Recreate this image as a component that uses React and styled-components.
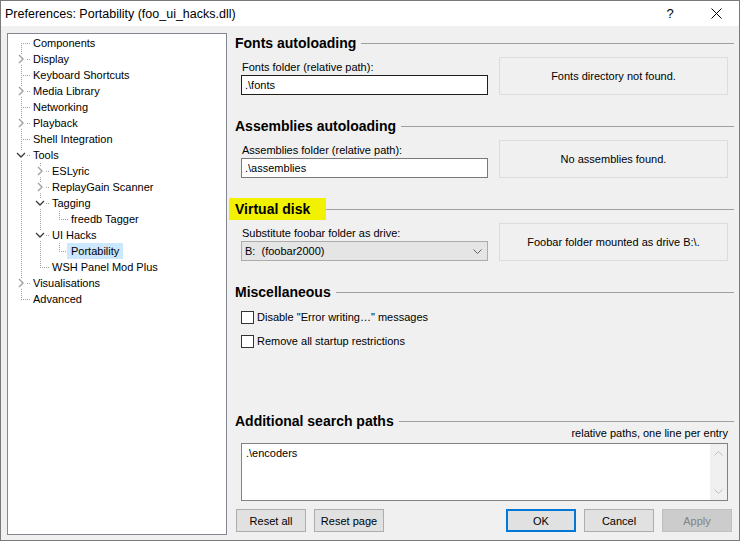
import React from "react";
import styled, { createGlobalStyle } from "styled-components";

const GlobalStyle = createGlobalStyle`
  body {
    margin: 0;
    background: #ffffff;
    font-family: "Liberation Sans", Arial, sans-serif;
    font-size: 11px;
    color: #000;
  }
  * { box-sizing: border-box; }
`;

const dotsV = "repeating-linear-gradient(to bottom, #a0a0a0 0 1px, transparent 1px 2px)";
const dotsH = "repeating-linear-gradient(to right, #a0a0a0 0 1px, transparent 1px 2px)";

const tree = [
  { label: "Components" },
  { label: "Display", collapsed: true },
  { label: "Keyboard Shortcuts" },
  { label: "Media Library", collapsed: true },
  { label: "Networking" },
  { label: "Playback", collapsed: true },
  { label: "Shell Integration" },
  {
    label: "Tools",
    open: true,
    kids: [
      { label: "ESLyric", collapsed: true },
      { label: "ReplayGain Scanner", collapsed: true },
      { label: "Tagging", open: true, kids: [{ label: "freedb Tagger" }] },
      { label: "UI Hacks", open: true, kids: [{ label: "Portability", selected: true }] },
      { label: "WSH Panel Mod Plus" },
    ],
  },
  { label: "Visualisations", collapsed: true },
  { label: "Advanced" },
];

function flatten(nodes, guides = [], out = []) {
  nodes.forEach((n, i) => {
    const last = i === nodes.length - 1;
    const first = guides.length === 0 && i === 0;
    out.push({ ...n, guides, last, first });
    if (n.open) flatten(n.kids, [...guides, !last], out);
  });
  return out;
}

function Chevron({ open }) {
  return (
    <svg width="11" height="16" viewBox="0 0 11 16" style={{ marginLeft: 4 }}>
      <rect x="0" y="3" width="11" height="10" fill="#fff" />
      {open ? (
        <path d="M1 6 L5 10 L9 6" fill="none" stroke="#3c3c3c" strokeWidth="1.3" />
      ) : (
        <path d="M3 4 L7 8 L3 12" fill="none" stroke="#a6a6a6" strokeWidth="1.5" />
      )}
    </svg>
  );
}

function App() {
  const rows = flatten(tree);
  return (
    <>
      <GlobalStyle />
      <Window>
        <TitleBar>
          <Title>Preferences: Portability (foo_ui_hacks.dll)</Title>
          <CaptionButton>?</CaptionButton>
          <CaptionButton>
            <svg width="11" height="11" viewBox="0 0 11 11">
              <path d="M0.5 0.5 L10.5 10.5 M10.5 0.5 L0.5 10.5" stroke="#000" strokeWidth="1" />
            </svg>
          </CaptionButton>
        </TitleBar>
        <Body>
          <Tree>
            {rows.map((r) => (
              <TreeRow key={r.label}>
                {r.guides.map((g, i) => (
                  <Guide key={i} $line={g} />
                ))}
                <Connector $first={r.first} $last={r.last}>
                  {(r.open || r.collapsed) && <Chevron open={r.open} />}
                </Connector>
                <TreeLabel $selected={r.selected}>{r.label}</TreeLabel>
              </TreeRow>
            ))}
          </Tree>
          <Panel>
            <SectionHeader>
              <HeaderText>Fonts autoloading</HeaderText>
              <HeaderLine />
            </SectionHeader>
            <FieldRow>
              <FieldColumn>
                <FieldLabel>Fonts folder (relative path):</FieldLabel>
                <TextBox $dark>{".\\fonts"}</TextBox>
              </FieldColumn>
              <StatusBox>Fonts directory not found.</StatusBox>
            </FieldRow>

            <SectionHeader $gap>
              <HeaderText>Assemblies autoloading</HeaderText>
              <HeaderLine />
            </SectionHeader>
            <FieldRow>
              <FieldColumn>
                <FieldLabel>Assemblies folder (relative path):</FieldLabel>
                <TextBox>{".\\assemblies"}</TextBox>
              </FieldColumn>
              <StatusBox>No assemblies found.</StatusBox>
            </FieldRow>

            <SectionHeader $gap>
              <HeaderText $highlight>Virtual disk</HeaderText>
              <HeaderLine $flush />
            </SectionHeader>
            <FieldRow>
              <FieldColumn>
                <FieldLabel>Substitute foobar folder as drive:</FieldLabel>
                <Select>
                  <span>B:  (foobar2000)</span>
                  <svg width="9" height="5" viewBox="0 0 9 5">
                    <path d="M0.5 0.5 L4.5 4.5 L8.5 0.5" fill="none" stroke="#606060" strokeWidth="1" />
                  </svg>
                </Select>
              </FieldColumn>
              <StatusBox>{"Foobar folder mounted as drive B:\\."}</StatusBox>
            </FieldRow>

            <SectionHeader $gap>
              <HeaderText>Miscellaneous</HeaderText>
              <HeaderLine />
            </SectionHeader>
            <CheckList>
              <CheckRow>
                <CheckBox />
                Disable "Error writing…" messages
              </CheckRow>
              <CheckRow>
                <CheckBox />
                Remove all startup restrictions
              </CheckRow>
            </CheckList>

            <Spacer />

            <SectionHeader>
              <HeaderText>Additional search paths</HeaderText>
              <HeaderLine />
            </SectionHeader>
            <Hint>relative paths, one line per entry</Hint>
            <TextArea>
              <TextAreaContent>{".\\encoders"}</TextAreaContent>
              <ScrollBar>
                <svg width="9" height="5" viewBox="0 0 9 5">
                  <path d="M0.5 4.5 L4.5 0.5 L8.5 4.5" fill="none" stroke="#c0c0c0" strokeWidth="1" />
                </svg>
                <svg width="9" height="5" viewBox="0 0 9 5">
                  <path d="M0.5 0.5 L4.5 4.5 L8.5 0.5" fill="none" stroke="#c0c0c0" strokeWidth="1" />
                </svg>
              </ScrollBar>
            </TextArea>

            <Footer>
              <Button>Reset all</Button>
              <Button>Reset page</Button>
              <Spacer />
              <Button $default>OK</Button>
              <Button>Cancel</Button>
              <Button $disabled>Apply</Button>
            </Footer>
          </Panel>
        </Body>
      </Window>
    </>
  );
}

const Window = styled.div`
  width: 740px;
  height: 541px;
  border: 1px solid #7a7a7a;
  background: #f0f0f0;
  display: flex;
  flex-direction: column;
`;

const TitleBar = styled.div`
  height: 25px;
  background: #ffffff;
  display: flex;
  align-items: center;
  padding-left: 4px;
  flex: none;
`;

const Title = styled.div`
  flex: 1;
  font-size: 12.5px;
  color: #000;
`;

const CaptionButton = styled.div`
  width: 46px;
  height: 25px;
  display: flex;
  align-items: center;
  justify-content: center;
  font-size: 13px;
`;

const Body = styled.div`
  flex: 1;
  display: flex;
  padding: 7px 5px 5px 6px;
  min-height: 0;
`;

const Tree = styled.div`
  width: 220px;
  flex: none;
  background: #ffffff;
  border: 1px solid #828790;
  padding: 1px 0 0 4px;
`;

const TreeRow = styled.div`
  display: flex;
  align-items: center;
  height: 16px;
`;

const Guide = styled.div`
  width: 19px;
  height: 16px;
  flex: none;
  background: ${(p) => (p.$line ? `${dotsV} 9px 0 / 1px 16px no-repeat` : "none")};
`;

const Connector = styled.div`
  width: 19px;
  height: 16px;
  flex: none;
  display: flex;
  align-items: center;
  background-image: ${dotsV}, ${dotsH};
  background-repeat: no-repeat;
  background-position: 9px ${(p) => (p.$first ? 8 : 0)}px, 9px 8px;
  background-size: 1px ${(p) => (p.$first ? 8 : p.$last ? 9 : 16)}px, 10px 1px;
`;

const TreeLabel = styled.span`
  margin-left: -2px;
  padding: 0 4px;
  line-height: 16px;
  white-space: nowrap;
  background: ${(p) => (p.$selected ? "#cce8ff" : "transparent")};
`;

const Panel = styled.div`
  flex: 1;
  margin-left: 2px;
  display: flex;
  flex-direction: column;
  min-width: 0;
`;

const SectionHeader = styled.div`
  display: flex;
  align-items: center;
  height: 20px;
  padding-left: 6px;
  margin-top: ${(p) => (p.$gap ? "21px" : "0")};
  flex: none;
`;

const HeaderText = styled.span`
  font-weight: bold;
  font-size: 14px;
  white-space: nowrap;
  line-height: 22px;
  ${(p) =>
    p.$highlight &&
    `
    background: #f2f200;
    margin-left: -6px;
    padding: 0 16px 0 6px;
  `}
`;

const HeaderLine = styled.div`
  flex: 1;
  height: 1px;
  background: #a0a0a0;
  margin-left: ${(p) => (p.$flush ? "0" : "5px")};
`;

const FieldRow = styled.div`
  display: grid;
  grid-template-columns: 247px 229px;
  column-gap: 11px;
  padding: 0 6px 0 12px;
  margin-top: 4px;
  height: 38px;
  flex: none;
`;

const FieldColumn = styled.div`
  display: flex;
  flex-direction: column;
  justify-content: flex-end;
`;

const FieldLabel = styled.div`
  line-height: 16px;
  padding-left: 1px;
`;

const TextBox = styled.div`
  height: 20px;
  background: #ffffff;
  border: 1px solid ${(p) => (p.$dark ? "#1e1e1e" : "#7a7a7a")};
  padding: 0 3px;
  line-height: 18px;
`;

const Select = styled.div`
  height: 20px;
  background: #e5e5e5;
  border: 1px solid #acacac;
  padding: 0 5px 0 3px;
  display: flex;
  align-items: center;
  justify-content: space-between;
  white-space: pre;
`;

const StatusBox = styled.div`
  border: 1px solid #dcdcdc;
  display: flex;
  align-items: center;
  justify-content: center;
`;

const CheckList = styled.div`
  margin-top: 3px;
  padding-left: 12px;
  display: flex;
  flex-direction: column;
  flex: none;
`;

const CheckRow = styled.div`
  height: 24px;
  display: flex;
  align-items: center;
  gap: 3px;
`;

const CheckBox = styled.span`
  width: 13px;
  height: 13px;
  background: #ffffff;
  border: 1px solid #333333;
  flex: none;
`;

const Spacer = styled.div`
  flex: 1;
`;

const Hint = styled.div`
  margin-top: -5px;
  line-height: 14px;
  text-align: right;
  padding-right: 6px;
  flex: none;
`;

const TextArea = styled.div`
  margin: 3px 6px 0 12px;
  height: 58px;
  background: #ffffff;
  border: 1px solid #828282;
  display: flex;
  flex: none;
`;

const TextAreaContent = styled.div`
  flex: 1;
  padding: 2px 4px;
  line-height: 14px;
`;

const ScrollBar = styled.div`
  width: 17px;
  background: #f0f0f0;
  display: flex;
  flex-direction: column;
  align-items: center;
  justify-content: space-between;
  padding: 7px 0 6px;
`;

const Footer = styled.div`
  display: flex;
  gap: 8px;
  padding: 0 2px 0 7px;
  margin: 8px 0 3px;
  flex: none;
`;

const Button = styled.div`
  width: 70px;
  height: 23px;
  display: flex;
  align-items: center;
  justify-content: center;
  background: ${(p) => (p.$disabled ? "#cccccc" : "#e1e1e1")};
  border: ${(p) => (p.$default ? "2px solid #0078d7" : p.$disabled ? "1px solid #bfbfbf" : "1px solid #adadad")};
  color: ${(p) => (p.$disabled ? "#838383" : "#000")};
`;

export default App;
